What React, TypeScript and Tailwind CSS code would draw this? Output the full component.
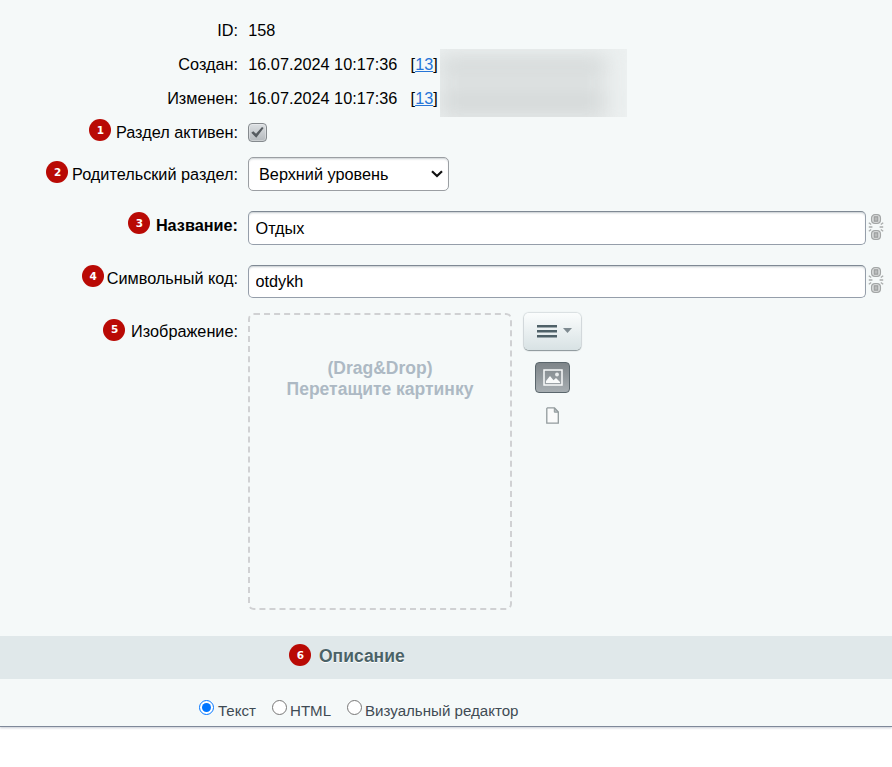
import { useState } from "react";
import type { ReactNode } from "react";

type EditorMode = "text" | "html" | "visual";

const MODES: { id: EditorMode; title: string; className: string }[] = [
  { id: "text", title: "Текст", className: "w-[73px] gap-[4px]" },
  { id: "html", title: "HTML", className: "w-[75px] gap-[3px]" },
  { id: "visual", title: "Визуальный редактор", className: "gap-[3px]" },
];

function Badge({ n }: { n: number }) {
  return (
    <span className="flex h-[22px] w-[22px] shrink-0 items-center justify-center rounded-full bg-[#b90a05] pl-px font-['DejaVu_Sans',Verdana,sans-serif] text-[10.5px] font-bold leading-none text-white">
      {n}
    </span>
  );
}

function Label({
  children,
  badge,
  badgeClass = "",
  className = "",
}: {
  children: ReactNode;
  badge?: number;
  badgeClass?: string;
  className?: string;
}) {
  return (
    <div className={`flex h-[34px] w-[238px] shrink-0 items-center justify-end whitespace-nowrap ${className}`}>
      {badge && (
        <span className={badgeClass}>
          <Badge n={badge} />
        </span>
      )}
      <span>{children}</span>
    </div>
  );
}

function Changed({ label, date }: { label: string; date: string }) {
  return (
    <div className="flex h-[34px] items-center whitespace-nowrap">
      <Label>{label}</Label>
      <span className="pl-[10.25px]">{date}</span>
      <span className="pl-[13.25px]">
        [
        <a href="#" className="text-[#2675d7] underline">
          13
        </a>
        ]
      </span>
    </div>
  );
}

function ChainIcon() {
  return (
    <svg width="16" height="28" viewBox="0 0 16 28" fill="none" className="shrink-0">
      {[6, 22].map((cy) => (
        <g key={cy}>
          <rect x="3.6" y={cy - 4.4} width="8.8" height="8.8" rx="3.4" fill="#e4e6e6" stroke="#a3a6a6" strokeWidth="1.3" />
          <rect x="6.2" y={cy - 2.2} width="3.6" height="4.4" fill="#b9bbbb" stroke="#999c9c" strokeWidth="1.1" />
        </g>
      ))}
      <path
        d="M.8 9.8l2.4 1.8M15.2 9.8l-2.4 1.8M.8 14h3.6M11.6 14h3.6M.8 18.2l2.4-1.8M15.2 18.2l-2.4-1.8"
        stroke="#a9acac"
        strokeWidth="1.3"
      />
    </svg>
  );
}

function TextField({
  value,
  onChange,
  className,
  iconClass,
}: {
  value: string;
  onChange: (v: string) => void;
  className: string;
  iconClass: string;
}) {
  return (
    <div className="flex items-start">
      <input
        value={value}
        onChange={(e) => onChange(e.target.value)}
        className={`ml-[10px] w-[618px] rounded-[5px] border border-[#959eaa] border-t-[#7f8994] bg-white px-[6.5px] shadow-[inset_0_2px_2px_-1px_rgba(150,160,165,0.55)] outline-none ${className}`}
      />
      <span className={`pl-[2px] ${iconClass}`}>
        <ChainIcon />
      </span>
    </div>
  );
}

export default function App() {
  const [active, setActive] = useState(true);
  const [name, setName] = useState("Отдых");
  const [code, setCode] = useState("otdykh");
  const [mode, setMode] = useState<EditorMode>("text");

  return (
    <div className="h-[767px] w-[892px] overflow-hidden bg-white font-['Liberation_Sans',Arial,sans-serif] text-[16.25px] leading-[20px] text-black">
      <div className="h-[727px] border-b border-[#7f899a] bg-[#f5f9f9] shadow-[0_1px_2px_rgba(120,130,150,0.4)]">
        <div className="flex h-[47px] items-center pt-[13px]">
          <Label>ID:</Label>
          <span className="pl-[10.25px]">158</span>
        </div>

        <div className="flex h-[68px]">
          <div className="w-[440px]">
            <Changed label="Создан:" date="16.07.2024 10:17:36" />
            <Changed label="Изменен:" date="16.07.2024 10:17:36" />
          </div>
          {/* hidden user names */}
          <div className="mt-[2px] h-[68px] w-[187px] overflow-hidden bg-[#ecf0f0]">
            <div className="mt-[5px] h-[76px] w-[166px] bg-[#e0e4e4] pt-[8px] blur-[10px]">
              <div className="h-[7px] bg-[#c6caca] blur-[2px]" />
              <div className="mt-[28px] h-[7px] bg-[#c2c6c6] blur-[2px]" />
            </div>
          </div>
        </div>

        <div className="flex h-[34px] items-center">
          <Label badge={1} badgeClass="mr-[5px] pb-[4px]">
            Раздел активен:
          </Label>
          <button
            type="button"
            role="checkbox"
            aria-checked={active}
            onClick={() => setActive(!active)}
            className="ml-[10px] flex h-[19px] w-[19px] items-center justify-center rounded-[4px] border border-[#858a8e] bg-linear-to-b from-[#dce0e3] to-[#b4b9bd] shadow-[inset_0_0_0_1px_rgba(255,255,255,0.3)]"
          >
            {active && (
              <svg width="15" height="13" viewBox="0 0 15 13" fill="none" className="shrink-0">
                <path d="M1.3 6.8l2-1.6 2.7 2.6L12 1l1.6 1L6.3 11.8z" fill="#555b60" />
              </svg>
            )}
          </button>
        </div>

        <div className="flex h-[62px] items-start pt-[8px]">
          <Label badge={2} badgeClass="mr-[4px] pb-[4px]">
            Родительский раздел:
          </Label>
          <button
            type="button"
            className="ml-[10px] flex h-[34px] w-[201px] items-center justify-between rounded-[5px] border border-[#9b9fa3] bg-white pl-[10px] pr-[5px] shadow-[inset_0_2px_2px_-1px_rgba(150,160,165,0.5)]"
          >
            <span>Верхний уровень</span>
            <svg width="12" height="8" viewBox="0 0 12 8" fill="none">
              <path d="M1 1.2l5 4.8 5-4.8" stroke="#111" strokeWidth="2.2" />
            </svg>
          </button>
        </div>

        <div className="flex h-[54px] items-start">
          <Label badge={3} badgeClass="mr-[6px] pb-[4px]" className="-mt-[3px] font-bold">
            Название:
          </Label>
          <TextField value={name} onChange={setName} className="h-[34px]" iconClass="pt-[2px]" />
        </div>

        <div className="flex h-[48px] items-start">
          <Label badge={4} badgeClass="mr-[3px] pb-[4px]" className="-mt-[4px]">
            Символьный код:
          </Label>
          <TextField value={code} onChange={setCode} className="h-[33px]" iconClass="pt-px" />
        </div>

        <div className="flex h-[323px] items-start">
          <Label badge={5} badgeClass="mr-[6px] pb-[3px]" className="mt-px">
            Изображение:
          </Label>
          <div className="ml-[10px] h-[297px] w-[264px] rounded-[6px] border-2 border-dashed border-[#d0d1d3] pt-[43px] text-center text-[17.5px] font-bold leading-[21px] text-[#adb9c4]">
            <div>(Drag&amp;Drop)</div>
            <div>Перетащите картинку</div>
          </div>
          <div className="ml-[12px] flex w-[57px] flex-col items-center">
            <button
              type="button"
              className="flex h-[37px] w-[57px] items-center gap-[6px] rounded-[5px] bg-linear-to-b from-[#fbfdfd] to-[#d8e2e4] pl-[13px] shadow-[0_1px_1px_rgba(60,75,80,0.5),0_0_1px_1px_rgba(130,145,150,0.25)]"
            >
              <svg width="20" height="13" viewBox="0 0 20 13">
                <path d="M0 1.2h20M0 6.2h20M0 11.2h20" stroke="#4f6168" strokeWidth="2.4" />
              </svg>
              <svg width="9" height="5" viewBox="0 0 9 5" className="mb-[2px]">
                <path d="M0 0h9L4.5 5z" fill="#7e8a90" />
              </svg>
            </button>
            <button
              type="button"
              className="mt-[12px] flex h-[31px] w-[35px] items-center justify-center rounded-[4px] border border-[#5a666c] bg-linear-to-b from-[#7e8589] to-[#a7aeb2]"
            >
              <svg width="20" height="17" viewBox="0 0 20 17" fill="none" className="shrink-0">
                <rect x="1" y="1" width="18" height="15" stroke="#f8fafa" strokeWidth="1.5" />
                <path d="M3 14v-2l4-5 3.5 4.2L13 9l4 4v1z" fill="#f8fafa" />
                <circle cx="14" cy="5.5" r="1.9" fill="#e9eced" />
              </svg>
            </button>
            <svg width="13" height="17" viewBox="0 0 13 17" fill="none" className="mt-[14px]">
              <path d="M1.5.8h7L12.3 5v11.2H.8V1.5z" fill="#fafbfb" stroke="#929b9d" strokeWidth="1.3" />
              <path d="M8.3 1v4.2h4z" fill="#b6bcbe" stroke="#929b9d" />
            </svg>
          </div>
        </div>

        <div className="flex h-[43px] items-start bg-[#e0e8ea] pl-[289px] pt-[8px]">
          <Badge n={6} />
          <span className="ml-[8px] mt-[2px] text-[17.5px] font-bold text-[#4b6267] [text-shadow:0_1px_0_#fff]">
            Описание
          </span>
        </div>

        <div className="flex pl-[199px] pt-[21px] text-[15.1px] text-[#3f4b54]">
          {MODES.map((m) => (
            <label key={m.id} className={`flex items-start whitespace-nowrap ${m.className}`}>
              <input
                type="radio"
                name="mode"
                checked={mode === m.id}
                onChange={() => setMode(m.id)}
                className="h-[15px] w-[15px] shrink-0"
              />
              <span className="mt-px">{m.title}</span>
            </label>
          ))}
        </div>
      </div>
    </div>
  );
}
